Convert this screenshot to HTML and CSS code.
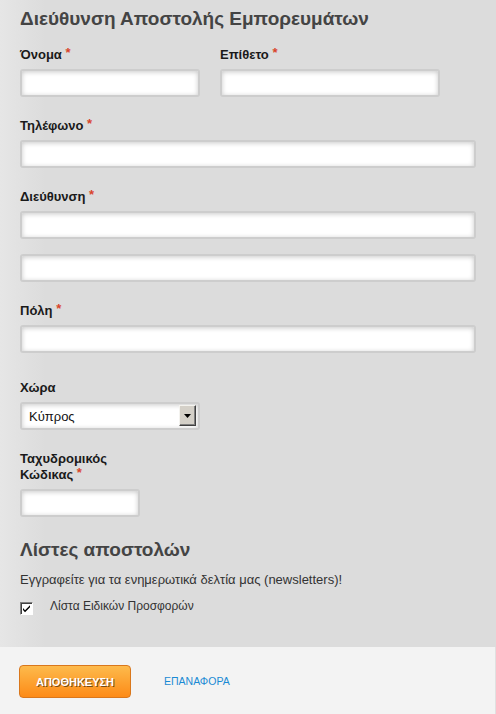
FILE: index.html
```html
<!DOCTYPE html>
<html lang="el">
<head>
<meta charset="utf-8">
<title>Διεύθυνση Αποστολής</title>
<link rel="stylesheet" href="styles.css">
</head>
<body>
<div class="page">
  <form class="form">
    <h1 class="title">Διεύθυνση Αποστολής Εμπορευμάτων</h1>

    <div class="row">
      <div class="field field-first">
        <label class="label">Όνομα <span class="req">*</span></label>
        <div class="input w-first"></div>
      </div>
      <div class="field field-last">
        <label class="label">Επίθετο <span class="req">*</span></label>
        <div class="input w-last"></div>
      </div>
    </div>

    <div class="field">
      <label class="label">Τηλέφωνο <span class="req">*</span></label>
      <div class="input w-full"></div>
    </div>

    <div class="field">
      <label class="label">Διεύθυνση <span class="req">*</span></label>
      <div class="input w-full"></div>
      <div class="input w-full second"></div>
    </div>

    <div class="field">
      <label class="label">Πόλη <span class="req">*</span></label>
      <div class="input w-full"></div>
    </div>

    <div class="field field-country">
      <label class="label">Χώρα</label>
      <div class="input select w-first">
        <span class="select-value">Κύπρος</span>
        <span class="select-btn">
          <svg width="7" height="4" viewBox="0 0 7 4"><path d="M0 0h7L3.5 4z" fill="#000"/></svg>
        </span>
      </div>
    </div>

    <div class="field">
      <label class="label">Ταχυδρομικός<br>Κώδικας <span class="req">*</span></label>
      <div class="input w-zip"></div>
    </div>

    <h2 class="subtitle">Λίστες αποστολών</h2>
    <p class="intro">Εγγραφείτε για τα ενημερωτικά δελτία μας (newsletters)!</p>
    <div class="check-row">
      <span class="checkbox">
        <svg width="9" height="9" viewBox="0 0 9 9"><path d="M1 4l2 2.2L8 1.2v2L3 8.2 1 6z" fill="#000"/></svg>
      </span>
      <span class="check-label">Λίστα Ειδικών Προσφορών</span>
    </div>
  </form>

  <div class="footer">
    <button class="btn-save" type="button">ΑΠΟΘΗΚΕΥΣΗ</button>
    <a class="link-reset" href="#">ΕΠΑΝΑΦΟΡΑ</a>
  </div>
</div>
</body>
</html>
```

FILE: styles.css
```css
html, body {
  margin: 0;
  padding: 0;
}

body {
  width: 496px;
  height: 714px;
  overflow: hidden;
  background: linear-gradient(to right, #e6e6e6 0, #dcdcdc 45px);
  font-family: "Liberation Sans", Arial, sans-serif;
  color: #1d1d1d;
}

.page {
  display: flex;
  flex-direction: column;
}

.form {
  padding: 7px 20px 0 20px;
  height: 640px;
  box-sizing: border-box;
}

.title {
  margin: 0 0 16px 0;
  font-size: 19px;
  line-height: 24px;
  font-weight: bold;
  color: #444444;
}

.row {
  display: flex;
  gap: 20px;
}

.field {
  margin-bottom: 21px;
}

.field-country {
  padding-top: 6px;
}

.label {
  display: block;
  font-size: 13px;
  line-height: 16px;
  font-weight: bold;
  color: #1a1a1a;
  margin-bottom: 6px;
}

.req {
  color: #d9442b;
  font-size: 13px;
  vertical-align: 2px;
  line-height: 0;
}

.input {
  height: 28px;
  box-sizing: border-box;
  background: #ffffff;
  border: 2px solid #cdcdcd;
  border-radius: 3px;
  box-shadow: inset 0 1px 5px rgba(0, 0, 0, 0.22);
}

.second {
  margin-top: 15px;
}

.w-first { width: 180px; }
.w-last { width: 220px; }
.w-full { width: 456px; }
.w-zip { width: 120px; }

.select {
  position: relative;
  display: flex;
  align-items: center;
}

.select-value {
  font-size: 13px;
  color: #111;
  padding-left: 7px;
}

.select-btn {
  position: absolute;
  right: 2px;
  top: 1px;
  width: 17px;
  height: 21px;
  box-sizing: border-box;
  background: #d4d0c8;
  border: 1px solid;
  border-color: #f4f3ef #404040 #404040 #f4f3ef;
  box-shadow: inset -1px -1px 0 #808080;
  display: flex;
  align-items: center;
  justify-content: center;
}

.subtitle {
  margin: 21px 0 10px 0;
  font-size: 19px;
  line-height: 24px;
  font-weight: bold;
  color: #444444;
}

.intro {
  margin: 0 0 10px 0;
  font-size: 13px;
  line-height: 16px;
  color: #333333;
}

.check-row {
  display: flex;
  align-items: flex-start;
  height: 16px;
}

.checkbox {
  width: 13px;
  height: 13px;
  margin-top: 4px;
  box-sizing: border-box;
  background: #ffffff;
  border: 1px solid;
  border-color: #808080 #ffffff #ffffff #808080;
  box-shadow: inset 1px 1px 0 #404040;
  display: flex;
  align-items: center;
  justify-content: center;
  margin-right: 17px;
}

.check-label {
  font-size: 12px;
  line-height: 16px;
  color: #333333;
}

.footer {
  height: 74px;
  box-sizing: border-box;
  background: #f3f3f3;
  border-right: 1px solid #e0e0e0;
  padding: 18px 0 0 19px;
  display: flex;
  align-items: flex-start;
  margin-top: 7px;
}

.btn-save {
  width: 112px;
  height: 33px;
  box-sizing: border-box;
  border: 1px solid #d9771c;
  border-radius: 4px;
  background: linear-gradient(to bottom, #fdba4c 0, #fd8b17 100%);
  color: #ffffff;
  font-family: "Liberation Sans", Arial, sans-serif;
  font-size: 11px;
  font-weight: bold;
  text-shadow: 1px 1px 0 #7a4a14;
  padding: 0;
  cursor: pointer;
}

.link-reset {
  margin-left: 33px;
  line-height: 33px;
  font-size: 10.5px;
  color: #1a8ad4;
  text-decoration: none;
}
```
